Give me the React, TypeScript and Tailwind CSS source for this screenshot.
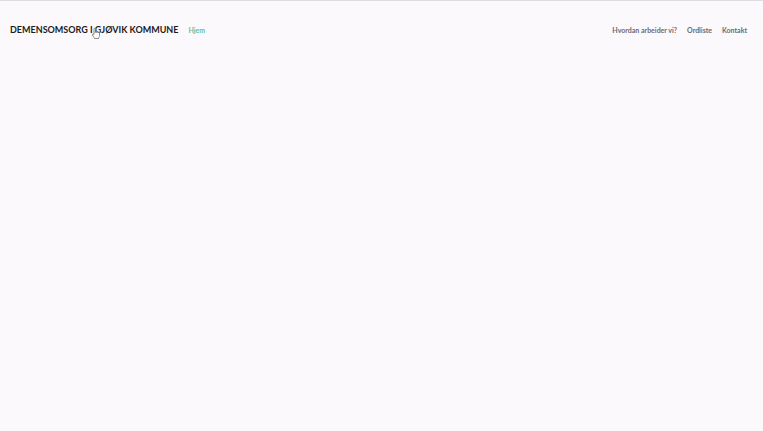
import React from 'react';

const links = [
  { label: 'Hvordan arbeider vi?', href: '#hvordan' },
  { label: 'Ordliste', href: '#ordliste' },
  { label: 'Kontakt', href: '#kontakt' },
];

const HandCursor = () => (
  <svg className="absolute left-1/2 top-2 -ml-0.5 h-3 w-2 pointer-events-none" viewBox="0 0 16 24" fill="#fff" stroke="#666" strokeWidth={1.5} strokeLinejoin="round" aria-hidden="true">
    <path d="M4 14V4a1.5 1.5 0 013 0v7V9a1.4 1.4 0 012.7 0v2.5V10a1.4 1.4 0 012.7 0v2-1a1.4 1.4 0 012.6 0v6c0 3-2 4-2 6H5c0-2-3-4-4-7-.7-2 1.2-3 3-1z" />
  </svg>
);

const Navbar: React.FC = () => {
  return (
    <header className="border-t border-[#dedce0]">
      <nav className="flex items-center pt-[18px] pl-2.5 pr-4">
        <a href="#top" className="relative text-[9px] leading-[22px] font-bold text-[#1c1c1e]">
          DEMENSOMSORG I GJØVIK KOMMUNE
          <HandCursor />
        </a>
        <a href="#hjem" className="ml-2.5 text-[7px] leading-[22px] font-bold text-[#67bd9e]">Hjem</a>
        <ul className="ml-auto flex gap-2.5 text-[7px] leading-[22px] font-bold text-[#6c6b70]">
          {links.map((link) => (
            <li key={link.href}>
              <a href={link.href}>{link.label}</a>
            </li>
          ))}
        </ul>
      </nav>
    </header>
  );
};

const App: React.FC = () => {
  return (
    <div id="top" className="min-h-screen bg-[#fbf9fb] font-['Lato',sans-serif]">
      <Navbar />
    </div>
  );
};

export default App;
